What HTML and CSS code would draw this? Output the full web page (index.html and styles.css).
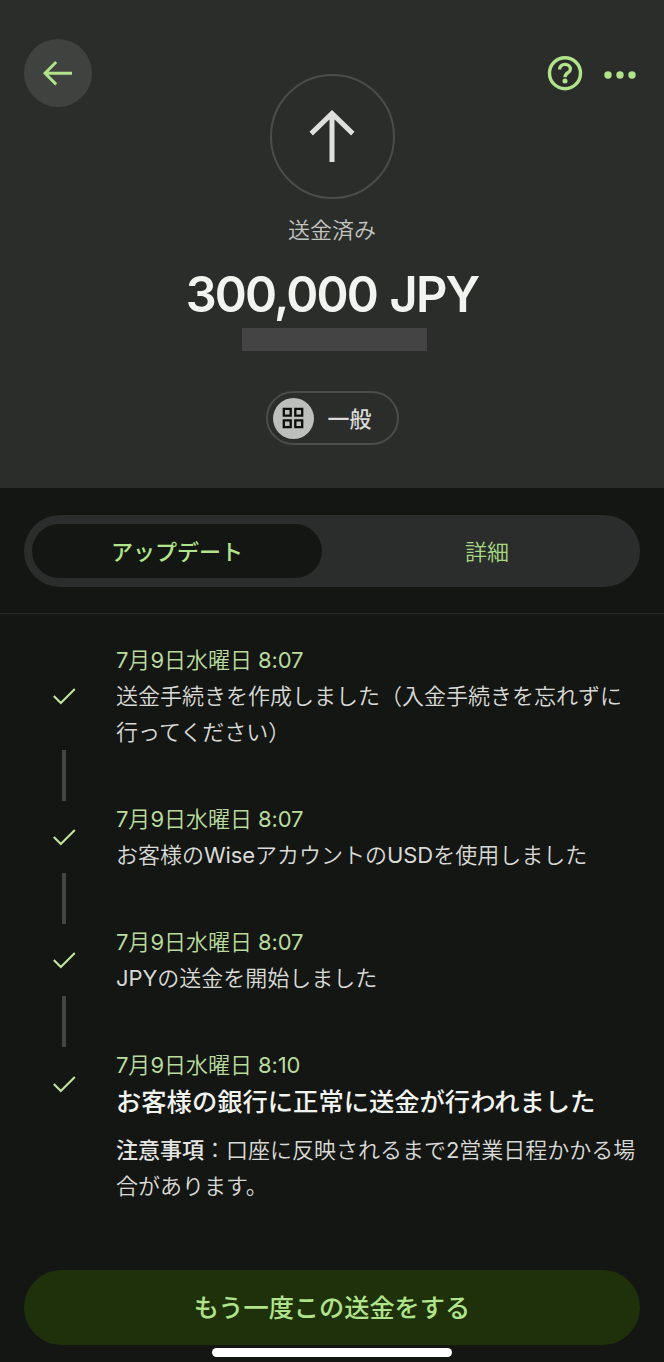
FILE: index.html
```html
<!DOCTYPE html>
<html lang="ja">
<head>
<meta charset="utf-8">
<title>送金済み</title>
<link rel="stylesheet" href="styles.css">
</head>
<body>
<div class="screen">
  <header class="hero">
    <nav class="topbar">
      <button class="back" aria-label="戻る">
        <svg width="68" height="68" viewBox="0 0 68 68"><path d="M48 34.2H21.5M32.2 23L21 34.2L32.2 45.4" fill="none" stroke="#b1e48a" stroke-width="2.9"/></svg>
      </button>
      <div class="actions">
        <svg width="36" height="36" viewBox="0 0 36 36"><circle cx="18" cy="18.2" r="15.5" fill="none" stroke="#b1e48a" stroke-width="3.4"/><path d="M12.6 14.6C12.6 11.4 15 9.4 18 9.4C21.1 9.4 23.4 11.4 23.4 14.2C23.4 17.7 18 17.8 18 22.2" fill="none" stroke="#b1e48a" stroke-width="3.3"/><circle cx="18" cy="26" r="2.5" fill="#b1e48a"/></svg>
        <svg width="32" height="36" viewBox="0 0 32 36"><g fill="#b1e48a"><circle cx="4" cy="20" r="3.7"/><circle cx="16" cy="20" r="3.7"/><circle cx="28" cy="20" r="3.7"/></g></svg>
      </div>
    </nav>
    <div class="avatar">
      <svg width="60" height="60" viewBox="0 0 60 60"><path d="M30 55V6.5M9.2 26.6L30 6.5L50.8 26.6" fill="none" stroke="#dfe0de" stroke-width="5"/></svg>
    </div>
    <p class="status">送金済み</p>
    <h1 class="amount">300,000 JPY</h1>
    <div class="redacted"></div>
    <div class="category">
      <span class="category-icon">
        <svg width="22" height="22" viewBox="0 0 22 22"><g fill="none" stroke="#0c0d0b" stroke-width="2.3"><path d="M1.8 1.8H8.7V8.7H1.8ZM13.3 1.8H20.2V8.7H13.3ZM1.8 13.3H8.7V20.2H1.8ZM13.3 13.3H20.2V20.2H13.3Z"/></g></svg>
      </span>
      <span class="category-name">一般</span>
    </div>
  </header>

  <div class="tabs-wrap">
    <div class="tabs">
      <div class="tab active">アップデート</div>
      <div class="tab">詳細</div>
    </div>
  </div>

  <main class="timeline">
    <section class="event">
      <div class="mark"><svg width="24" height="20" viewBox="0 0 24 20"><path d="M1.8 10L8.8 17L22.8 3" fill="none" stroke="#bde59c" stroke-width="2.1"/></svg></div>
      <div class="copy"><p class="date"><span class="latin">7</span>月<span class="latin">9</span>日水曜日<span class="latin"> 8:07</span></p><p>送金手続きを作成しました（入金手続きを忘れずに<br>行ってください）</p></div>
    </section>
    <div class="link"></div>
    <section class="event">
      <div class="mark"><svg width="24" height="20" viewBox="0 0 24 20"><path d="M1.8 10L8.8 17L22.8 3" fill="none" stroke="#bde59c" stroke-width="2.1"/></svg></div>
      <div class="copy"><p class="date"><span class="latin">7</span>月<span class="latin">9</span>日水曜日<span class="latin"> 8:07</span></p><p>お客様の<span class="latin">Wise</span>アカウントの<span class="latin">USD</span>を使用しました</p></div>
    </section>
    <div class="link"></div>
    <section class="event">
      <div class="mark"><svg width="24" height="20" viewBox="0 0 24 20"><path d="M1.8 10L8.8 17L22.8 3" fill="none" stroke="#bde59c" stroke-width="2.1"/></svg></div>
      <div class="copy"><p class="date"><span class="latin">7</span>月<span class="latin">9</span>日水曜日<span class="latin"> 8:07</span></p><p><span class="latin">JPY</span>の送金を開始しました</p></div>
    </section>
    <div class="link"></div>
    <section class="event">
      <div class="mark"><svg width="24" height="20" viewBox="0 0 24 20"><path d="M1.8 10L8.8 17L22.8 3" fill="none" stroke="#bde59c" stroke-width="2.1"/></svg></div>
      <div class="copy"><p class="date"><span class="latin">7</span>月<span class="latin">9</span>日水曜日<span class="latin"> 8:10</span></p><h2 class="done">お客様の銀行に正常に送金が行われました</h2></div>
    </section>
    <p class="note"><strong>注意事項</strong>：口座に反映されるまで<span class="latin">2</span>営業日程かかる場<br>合があります。</p>
  </main>

  <footer class="footer">
    <button class="repeat">もう一度この送金をする</button>
    <div class="home"></div>
  </footer>
</div>
</body>
</html>
```
FILE: styles.css
```css
* { box-sizing: border-box; }
body, p, h1, h2 { margin: 0; }
body {
  background: #141613;
  color: #d9dad7;
  font: 350 22px/36px Inter, "Noto Sans CJK JP", sans-serif;
}
button { border: 0; padding: 0; font-family: inherit; }
svg { display: block; flex: none; }
.screen { width: 664px; height: 1362px; display: flex; flex-direction: column; overflow: hidden; }
.latin { font-weight: 400; letter-spacing: -0.1px; }

.hero {
  height: 488px;
  padding-top: 39px;
  background: #2b2d2b;
  display: flex;
  flex-direction: column;
  align-items: center;
  flex: none;
}
.topbar {
  width: 100%;
  height: 68px;
  padding: 0 28px 0 24px;
  display: flex;
  justify-content: space-between;
  align-items: center;
}
.back { width: 68px; height: 68px; border-radius: 50%; background: #40423f; }
.actions { display: flex; gap: 21px; }
.avatar {
  width: 125px;
  height: 125px;
  margin-top: -33px;
  border: 2px solid #4b4d4a;
  border-radius: 50%;
  display: flex;
  align-items: center;
  justify-content: center;
}
.status { margin-top: 13px; color: #c3c5c1; }
.amount {
  margin-top: 17px;
  font-size: 48.7px;
  line-height: 60px;
  font-weight: 600;
  letter-spacing: -1.85px;
  word-spacing: 2px;
  color: #f2f4ef;
  white-space: nowrap;
}
.redacted { width: 185px; height: 23px; margin: 3px 0 0 4px; background: #444; }
.category {
  width: 133px;
  height: 54px;
  margin-top: 40px;
  padding-left: 5px;
  border: 2px solid #4b4d4a;
  border-radius: 27px;
  display: flex;
  align-items: center;
  gap: 14px;
  font-weight: 500;
}
.category-name { padding-top: 1px; }
.category-icon {
  width: 41px;
  height: 41px;
  border-radius: 50%;
  background: #bcbfbb;
  display: flex;
  align-items: center;
  justify-content: center;
}

.tabs-wrap { height: 126px; padding: 27px 24px 0; border-bottom: 1px solid #292724; flex: none; }
.tabs {
  height: 72px;
  padding: 9px 8px;
  border-radius: 36px;
  background: #2b2d2c;
  display: flex;
  gap: 20px;
}
.tab { flex: 1; padding-top: 1px; display: flex; align-items: center; justify-content: center; border-radius: 27px; color: #a8da83; }
.tab.active { background: #141613; color: #b1e48a; font-weight: 500; }

.timeline { padding: 28px 0 0 52px; flex: 1; }
.event { display: flex; align-items: center; gap: 40px; }
.copy { white-space: nowrap; }
.date { color: #badb9e; }
.link { width: 4px; height: 51px; margin-left: 10px; background: #444643; }
.done { font-size: 25.3px; line-height: 38px; font-weight: 500; color: #f1f3ef; }
.note { margin: 11px 0 0 64px; white-space: nowrap; }
.note strong { font-weight: 500; color: #e4e5e2; }

.footer { height: 92px; padding: 0 24px; display: flex; flex-direction: column; align-items: center; flex: none; }
.repeat {
  width: 616px;
  height: 75px;
  flex: none;
  border-radius: 37.5px;
  background: #1f310b;
  color: #b1e48a;
  font-size: 25.2px;
  line-height: 36px;
  font-weight: 500;
}
.home { width: 240px; height: 9px; margin-top: 3px; border-radius: 5px; background: #fff; flex: none; }
```
